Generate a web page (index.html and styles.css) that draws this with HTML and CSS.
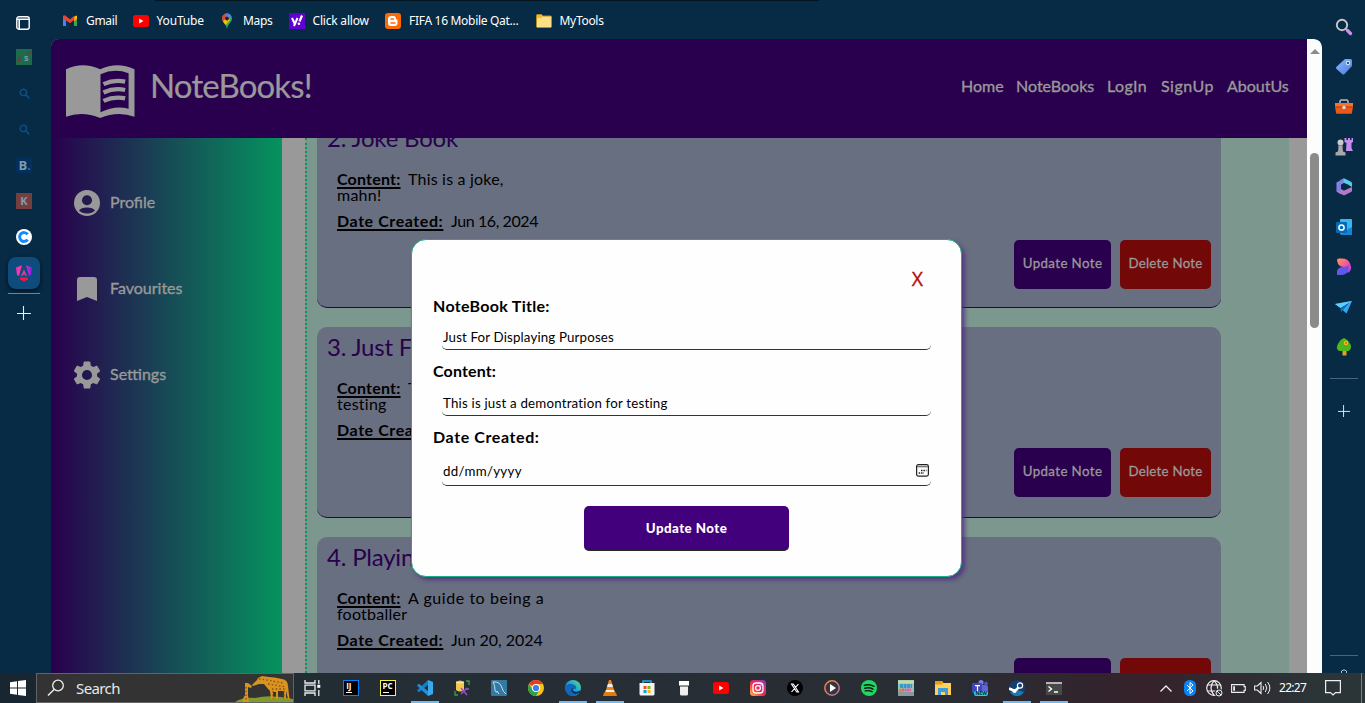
FILE: index.html
```html
<!DOCTYPE html>
<html lang="en">
<head>
<meta charset="utf-8">
<title>NoteBooks!</title>
<link rel="stylesheet" href="styles.css">
</head>
<body>
<svg width="0" height="0" class="defs">
  <defs>
    <linearGradient id="gEdge" x1="0" y1="1" x2="1" y2="0"><stop offset="0" stop-color="#0c59a4"/><stop offset=".5" stop-color="#1b9de2"/><stop offset="1" stop-color="#5fe07a"/></linearGradient>
    <linearGradient id="gInsta" x1="0" y1="1" x2="1" y2="0"><stop offset="0" stop-color="#fdc13d"/><stop offset=".45" stop-color="#f0294e"/><stop offset="1" stop-color="#8a3ac8"/></linearGradient>
    <linearGradient id="gRing" x1="0" y1="0" x2="1" y2="1"><stop offset="0" stop-color="#f58b3c"/><stop offset="1" stop-color="#b06ac0"/></linearGradient>
    <linearGradient id="gAng" x1="0" y1="0" x2="1" y2="0"><stop offset="0" stop-color="#ff2fb5"/><stop offset=".5" stop-color="#f23a9c"/><stop offset="1" stop-color="#7a1cff"/></linearGradient>
    <linearGradient id="gDes" x1="0" y1="0" x2="1" y2="1"><stop offset="0" stop-color="#ff9b52"/><stop offset=".6" stop-color="#f04bb0"/><stop offset="1" stop-color="#a23df0"/></linearGradient>
    <linearGradient id="gTag" x1="0" y1="0" x2="1" y2="1"><stop offset="0" stop-color="#8ab9ff"/><stop offset="1" stop-color="#4a7be0"/></linearGradient>
    <symbol id="yt" viewBox="0 0 16 12"><rect width="16" height="12" rx="2.6" fill="#f00"/><path d="M6.2 3.6v4.8L10.4 6z" fill="#fff"/></symbol>
    <symbol id="mag" viewBox="0 0 10 10"><circle cx="4" cy="4" r="2.9" fill="none" stroke="#0d4e86" stroke-width="1.3"/><path d="M6.2 6.2l3.2 3.2" stroke="#0d4e86" stroke-width="1.4"/></symbol>
    <symbol id="plus" viewBox="0 0 14 14"><path d="M6.500 0v14M0 7.500h14" stroke="#e8eef2" stroke-width="1.1"/></symbol>
  </defs>
</svg>

<div class="desktop">
  <aside class="tabs">
    <div class="tab-menu"><svg width="14" height="14" viewBox="0 0 14 14"><rect x=".8" y=".8" width="12.4" height="12.4" rx="2" fill="none" stroke="#fff" stroke-width="1.4"/><path d="M1 3.3h12M3.200 4v9" stroke="#fff" stroke-width="1.6"/></svg></div>
    <div class="tab"><svg width="16" height="16" viewBox="0 0 16 16"><rect width="16" height="16" fill="#1e6b4c"/><path d="M4 8q-3 3-1 4M2 12l3-1M11 5q4-2 4-1" stroke="#79303c" stroke-width="1.3" fill="none"/><text x="8" y="12" font-size="9" class="glyph-soft">s</text></svg></div>
    <div class="tab"><svg width="11" height="11"><use href="#mag"/></svg></div>
    <div class="tab"><svg width="11" height="11"><use href="#mag"/></svg></div>
    <div class="tab"><svg width="16" height="16" viewBox="0 0 16 16"><rect width="16" height="16" rx="2" fill="#032f5f"/><text x="2.5" y="13" font-size="13" class="glyph-soft">B</text><circle cx="13" cy="12" r="1.3" fill="#0c6a97"/></svg></div>
    <div class="tab"><svg width="16" height="16" viewBox="0 0 16 16"><rect width="16" height="16" fill="#743f3e"/><text x="4.2" y="12.2" font-size="11" class="glyph-soft">K</text></svg></div>
    <div class="tab"><svg width="16" height="16" viewBox="0 0 16 16"><circle cx="8" cy="8" r="8" fill="#fff"/><path d="M11.6 5.4A4.4 4.4 0 1 0 11.6 10.6" fill="none" stroke="#1388ff" stroke-width="3"/></svg></div>
    <div class="tab"><div class="tab-active"><svg width="16" height="17" viewBox="0 0 16 17"><path d="M0 2.500L6 .3 3 11 1 10zM16 2.500L10 .3 13 11l2-1z" fill="url(#gAng)"/><path d="M8 4.500L11 11H9.500L8.800 9.500H7.200L6.500 11H5z" fill="#e83aa0"/><path d="M4 12.500h8v2L8 16.500l-4-2z" fill="#ff0f4f"/></svg></div></div>
    <div class="tab-line"></div>
    <div class="tab-plus"><svg width="14" height="14"><use href="#plus"/></svg></div>
  </aside>

  <section class="center">
    <nav class="bookmarks">
      <div class="bm"><svg width="16" height="16" viewBox="0 0 16 16"><path d="M1 3.500v9.500h3V6z" fill="#4285f4"/><path d="M15 3.500v9.500h-3V6z" fill="#34a853"/><path d="M12 3.600l3-1v3.200l-3 2.400z" fill="#fbbc04"/><path d="M1 3q.8-1.500 2.300-.4L8 6.200l4.400-3.400v4L8 10.200 1 5.400z" fill="#ea4335"/></svg><span class="w-30">Gmail</span></div>
      <div class="bm"><svg width="16" height="12"><use href="#yt"/></svg><span class="w-46">YouTube</span></div>
      <div class="bm"><svg width="16" height="16" viewBox="0 0 16 16"><path d="M8 .5a5 5 0 0 1 5 5c0 4-4 5-5 10.300-1-5.300-5-6.300-5-10.300a5 5 0 0 1 5-5z" fill="#34a853"/><path d="M3 5.500a5 5 0 0 1 7-4.600L4.500 9C3.500 7.500 3 6.800 3 5.500z" fill="#ea4335"/><path d="M6 .9a5 5 0 0 1 6.500 2.500L8 5z" fill="#4285f4"/><path d="M4 8.500L9 3l2 4-4.500 5z" fill="#fbbc04"/><circle cx="8" cy="5.500" r="1.900" fill="#223"/></svg><span class="w-29">Maps</span></div>
      <div class="bm"><svg width="16" height="16" viewBox="0 0 16 16"><rect width="16" height="16" fill="#6001d2"/><path d="M3 5l2.600 5.500M8.500 5L5 13" stroke="#fff" stroke-width="2"/><path d="M13 2.500L10.500 8.500" stroke="#fff" stroke-width="2.200"/><circle cx="9.900" cy="10.800" r="1.300" fill="#fff"/></svg><span class="w-56">Click allow</span></div>
      <div class="bm"><svg width="16" height="16" viewBox="0 0 16 16"><rect width="16" height="16" rx="3" fill="#ff6a00"/><path d="M6 3h2.500Q11 3 11 6l1.500.8V10q0 3-3 3H6q-3 0-3-3V6q0-3 3-3z" fill="#fff"/><path d="M6 6h2.500M6 10h4" stroke="#ff6a00" stroke-width="1.500" stroke-linecap="round"/></svg><span class="w-110">FIFA 16 Mobile Qat...</span></div>
      <div class="bm"><svg width="16" height="14" viewBox="0 0 16 14"><path d="M.5 1.500q0-1 1-1h4l1 1.500h8q1 0 1 1v9.500q0 1-1 1H1.500q-1 0-1-1z" fill="#ffdf85" stroke="#b58b1e"/><path d="M1 1h4.800l.7 1.500L5.500 4H1z" fill="#f4bd22"/></svg><span class="w-44">MyTools</span></div>
    </nav>

    <div class="page">
      <div class="site">
        <header class="site-head">
          <svg class="book" width="69" height="54" viewBox="0 0 70 54"><path fill="#999" fill-rule="evenodd" d="M0 4Q17-4.500 34.700 4Q52-4.500 69.500 4V52Q52 46 34.700 53.500Q17 46 0 52zM35 9V47.500Q50 40 63.500 44V8Q49 2.500 35 9z"/><path d="M38 19Q49 14 60 16.500M38 27.500Q49 22.500 60 25M38 36Q49 31 60 33.500" fill="none" stroke="#999" stroke-width="4.300"/></svg>
          <h1>NoteBooks!</h1>
          <nav class="links"><a class="l1">Home</a><a class="l2">NoteBooks</a><a class="l3">LogIn</a><a class="l4">SignUp</a><a class="l5">AboutUs</a></nav>
        </header>
        <div class="site-body">
          <aside class="menu">
            <div class="menu-item"><svg width="26" height="26" viewBox="0 0 26 26"><circle cx="13" cy="13" r="13" fill="#999"/><circle cx="13" cy="10.300" r="5" fill="#241a50"/><path d="M5 20.500Q7 17.500 13 17.500T21 20.500Q18 23.400 13 23.400T5 20.500z" fill="#241a50"/></svg><span class="m1">Profile</span></div>
            <div class="menu-item"><svg width="26" height="26" viewBox="0 0 26 26"><path d="M3 4q0-3 3-3h14q3 0 3 3v21l-10-4-10 4z" fill="#999"/></svg><span class="m2">Favourites</span></div>
            <div class="menu-item"><svg width="28" height="28" viewBox="2 2 20 20" class="gear"><path fill="#999" d="M19.140 12.940c.04-.3.060-.61.060-.94s-.02-.64-.070-.94l2.030-1.580a.49.490 0 0 0 .12-.61l-1.920-3.320a.49.490 0 0 0-.59-.22l-2.390.96c-.5-.38-1.030-.7-1.620-.94L14.400 2.810A.48.480 0 0 0 13.920 2.400h-3.840c-.24 0-.43.170-.47.410l-.36 2.540c-.59.240-1.130.57-1.620.94l-2.390-.96a.48.480 0 0 0-.59.220L2.740 8.870c-.12.210-.08.470.12.610l2.030 1.580c-.05.300-.09.630-.09.940s.02.640.070.940l-2.030 1.580a.49.490 0 0 0-.12.610l1.920 3.320c.12.220.37.290.59.220l2.390-.96c.5.380 1.030.7 1.620.94l.36 2.540c.05.240.24.410.48.410h3.840c.24 0 .44-.17.470-.41l.36-2.540c.59-.24 1.130-.56 1.620-.94l2.390.96c.22.080.47 0 .59-.22l1.920-3.320a.48.480 0 0 0-.12-.61zM12 15.600a3.600 3.600 0 1 1 0-7.200 3.600 3.600 0 0 1 0 7.200z"/></svg><span class="m3">Settings</span></div>
          </aside>
          <main class="notes">
            <article class="card">
              <h2>2. Joke Book</h2>
              <p><b class="k1">Content:</b><span class="v1">This is a joke,</span></p><p><span class="c1">mahn!</span></p>
              <p class="date"><b class="k2">Date Created:</b><span class="v2">Jun 16, 2024</span></p>
              <div class="actions"><button class="upd">Update Note</button><button class="del">Delete Note</button></div>
            </article>
            <article class="card">
              <h2>3. Just For</h2>
              <p><b class="k1">Content:</b><span class="v1">This</span></p><p><span class="c1">testing</span></p>
              <p class="date"><b class="k2">Date Created:</b></p>
              <div class="actions"><button class="upd">Update Note</button><button class="del">Delete Note</button></div>
            </article>
            <article class="card">
              <h2>4. Playing</h2>
              <p><b class="k1">Content:</b><span class="v4">A guide to being a</span></p><p><span class="c1">footballer</span></p>
              <p class="date"><b class="k2">Date Created:</b><span class="v5">Jun 20, 2024</span></p>
              <div class="actions"><button class="upd">Update Note</button><button class="del">Delete Note</button></div>
            </article>
          </main>
        </div>
        <div class="modal">
          <div class="close">X</div>
          <div class="label f1">NoteBook Title:</div>
          <div class="field"><span class="i1">Just For Displaying Purposes</span></div>
          <div class="label f2">Content:</div>
          <div class="field mid"><span class="i2">This is just a demontration for testing</span></div>
          <div class="label f3">Date Created:</div>
          <div class="field tall"><span class="i3">dd/mm/yyyy</span><svg width="13" height="13" viewBox="0 0 13 13"><rect x=".6" y=".6" width="11.800" height="11.500" rx="1.800" fill="none" stroke="#222" stroke-width="1.200"/><path d="M1 2.600h11" stroke="#777" stroke-width="1.500"/><path d="M5 6.500H10.500M2.700 9H8" stroke="#222" stroke-width="1.500" stroke-dasharray="1.500 .9"/></svg></div>
          <button class="save">Update Note</button>
        </div>
      </div>
      <div class="scroll"><svg width="10" height="5" viewBox="0 0 10 5"><path d="M0 5l5-5 5 5z" fill="#8b8b8b"/></svg><div class="thumb"></div></div>
    </div>
  </section>

  <aside class="apps">
    <div class="app"><svg width="18" height="18" viewBox="0 0 18 18"><circle cx="7" cy="7" r="5.200" fill="none" stroke="#c8c8c8" stroke-width="1.900"/><path d="M11 11l2 2" stroke="#bbb" stroke-width="2"/><path d="M12.500 12.500l3 3" stroke="#cf8df5" stroke-width="3.200" stroke-linecap="round"/></svg></div>
    <div class="app"><svg width="18" height="18" viewBox="0 0 18 18"><path d="M10 1h5.500q1.500 0 1.500 1.500V8L9.500 16q-1.200 1-2.300 0L1.500 11q-1-1.200 0-2.300z" fill="url(#gTag)"/><circle cx="13" cy="5" r="2.200" fill="#d6e4f5"/><circle cx="13" cy="5" r="1" fill="#123"/></svg></div>
    <div class="app"><svg width="18" height="18" viewBox="0 0 18 18"><path d="M5 5V3.500Q5 2 6.500 2h5Q13 2 13 3.500V5" fill="none" stroke="#bbb" stroke-width="1.500"/><path d="M0 5h18v3.500L17 15q0 .8-1 .8H2q-1 0-1-.8L0 8.500z" fill="#e8591b"/><path d="M0 5h18v3.500H0z" fill="#f4712f"/><path d="M0 9h18" stroke="#b83c0e"/><circle cx="9" cy="9.500" r="1.700" fill="#ddd"/></svg></div>
    <div class="app"><svg width="18" height="18" viewBox="0 0 18 18"><path d="M9.500 0h2v2h1.500V0h2v2h1.500V0H18v4l-1.500 1v5l1.500 3h-7L11.500 5 9.500 4z" fill="#c58cf0"/><circle cx="5.500" cy="4.500" r="3" fill="#c9c9c9"/><path d="M3 7.500h5l-.5 1.500.5 4.500 2.500 1V17.500H.5v-3l2.500-1L3.500 9z" fill="#a8a8a8"/></svg></div>
    <div class="app"><svg width="18" height="18" viewBox="0 0 18 18"><path d="M9 .5l-7.500 4v9l4.500 3V6.500L9 5l2-1z" fill="#8c84e0"/><path d="M8 .8q1-.5 2 0l6 3q1 .5 1 1.700V9l-5-3-4-1z" fill="#58c9ef"/><path d="M17 9v3.500q0 1-1 1.500l-6 3q-1 .5-2 0l-5-3 3-4 3 2.500z" fill="#b47ac8"/><path d="M5 1.800l4-1.600V5L6 7v6L1.500 12z" fill="#6f7fe2" opacity=".6"/><path d="M6 7l3-2 3.500 2v3.500L9 12.500 6 11z" fill="#072944"/></svg></div>
    <div class="app"><svg width="18" height="18" viewBox="0 0 18 18"><rect x="5" y="1" width="12" height="15" rx="1" fill="#35b8f1"/><path d="M17 9v8H5l8-6z" fill="#1684d8"/><rect x="1" y="4" width="11" height="11" rx="1" fill="#0669b4"/><circle cx="6.500" cy="9.500" r="2.600" fill="none" stroke="#fff" stroke-width="1.500"/></svg></div>
    <div class="app"><svg width="18" height="18" viewBox="0 0 18 18"><path d="M2 2q0-1.500 2-1.500h3q6 0 8 5Q18 12 13 15L9 9q-4 0-6-3z" fill="url(#gDes)"/><path d="M2 17V13q1-4 6-4 4 0 5.500-2 1.500 9-6.500 10z" fill="#6258e8"/></svg></div>
    <div class="app"><svg width="18" height="18" viewBox="0 0 18 18"><path d="M0 6l17-3-5.500 12.500-4-3.500L14 5 5.500 10z" fill="#2fa9f0"/><path d="M0 6l17-3L5.500 10z" fill="#64ccfa"/><path d="M5.500 10L14 5l-6 7-2 2z" fill="#0d72c6"/></svg></div>
    <div class="app"><svg width="18" height="18" viewBox="0 0 18 18"><path d="M7.500 12h4v5.500h-4z" fill="#e8a11d"/><path d="M9 0q4 1.500 5.500 5 3.500 4-.5 8H4q-4-3-.5-8Q5 1.500 9 0z" fill="#4db51e"/><circle cx="11" cy="5" r="2.300" fill="#f7b817"/><circle cx="11" cy="5" r=".9" fill="#e2521b"/></svg></div>
    <div class="app-line"></div>
    <div class="app-plus"><svg width="12" height="12"><use href="#plus"/></svg></div>
    <div class="app-line low"></div>
    <svg class="app-cog" width="6" height="4" viewBox="0 0 6 4"><path d="M.5 4V2Q3-.5 5.500 2v2" fill="none" stroke="#b8c4cc"/></svg>
  </aside>
</div>

<footer class="taskbar">
  <div class="start"><svg width="16" height="16" viewBox="0 0 16 16"><path d="M0 2.200L7 1.200V7.500H0zM8 1L16 0v7.500H8zM0 8.500h7v6.300L0 13.800zM8 8.500h8V16l-8-1z" fill="#fff"/></svg></div>
  <div class="search">
    <svg width="18" height="18" viewBox="0 0 18 18"><circle cx="11" cy="6.500" r="5.300" fill="none" stroke="#eee" stroke-width="1.300"/><path d="M7.300 10.300L1 16.500" stroke="#eee" stroke-width="1.400"/></svg>
    <span>Search</span>
    <svg class="giraffe" width="58" height="26" viewBox="0 0 58 26"><path d="M0 26q8-5 20-4 16-4 38 1v3z" fill="#7f9c2c"/><path d="M22 4l-5 5 1 1 6-2 5 0q4 5 6 7l1 8h2v-7h3v7h2v-8h6v8h2v-8l2 8h1.500L53 10q0-6-6-7-8-2-13-2l-7-1-4 2z" fill="#d9931f"/><path d="M10 7l3 0 4 3-1 2-3-1v8l1 7h-7q1-4 3-7z" fill="#d9931f"/><path d="M24 3l8 1 16 3M33 8l18 3M37 13h14M38 15v8M49 15v8M11 11v13" fill="none" stroke="#8a4c12" stroke-width="1.300" stroke-dasharray="1.500 2.200"/></svg>
  </div>
  <div class="task view"><svg width="17" height="16" viewBox="0 0 17 16"><path d="M1 0v3h10V0M1 16v-3h10v3M1 5.200h10v5.600H1zM14.800 0v4M14.800 10v6" fill="none" stroke="#eee" stroke-width="1.300"/><rect x="13.300" y="4.800" width="3" height="3" fill="#fff"/></svg></div>
  <div class="task"><svg width="16" height="16" viewBox="0 0 16 16"><rect x=".5" y=".5" width="15" height="15" fill="#000" stroke="#087cfa"/><text x="3.200" y="9" font-size="8" class="glyph">IJ</text><path d="M3 12.500h6" stroke="#fff"/></svg></div>
  <div class="task"><svg width="16" height="16" viewBox="0 0 16 16"><rect x=".5" y=".5" width="15" height="15" fill="#000" stroke="#f5f04a"/><text x="2.500" y="9" font-size="8" class="glyph">PC</text><path d="M3 12.500h6" stroke="#fff"/></svg></div>
  <div class="task on"><svg width="16" height="16" viewBox="0 0 16 16"><path d="M11 0l5 2v12l-5 2z" fill="#3ba9ee"/><path d="M11 0v5L2 12.300.3 11 .3 10z" fill="#147dc2"/><path d="M11 16v-5L2 3.700.3 5v1z" fill="#1e8ed8"/></svg></div>
  <div class="task"><svg width="16" height="16" viewBox="0 0 16 16"><path d="M2 2q4-3 8 0v8q-4 3-8 0z" fill="#f1c84c"/><path d="M2 2q4 2 8 0" stroke="#fff0b0" fill="none"/><path d="M12 1h3v4M1 11v4h3" fill="none" stroke="#3ca03c" stroke-width="1.300"/><path d="M7 8l6 7M13 8l-6 6M12 9h3" stroke="#9b4fc8" stroke-width="1.500"/></svg></div>
  <div class="task"><svg width="16" height="16" viewBox="0 0 16 16"><rect width="16" height="16" rx="1" fill="#3279a4"/><path d="M2 2q7-1 9 6 1 4 4 6M2 2q2 3 2 8 1 4 2 1l2 3" fill="none" stroke="#c4dfec"/></svg></div>
  <div class="task"><svg width="16" height="16" viewBox="0 0 16 16"><circle cx="8" cy="8" r="8" fill="#fbc116"/><path d="M8 8L1.100 4A8 8 0 0 1 14.900 4H8z" fill="#e33b2e"/><path d="M1.100 4A8 8 0 0 0 8 16l3.500-6H8L4.500 10z" fill="#2ba24c"/><circle cx="8" cy="8" r="4" fill="#fff"/><circle cx="8" cy="8" r="3.100" fill="#3b7ded"/></svg></div>
  <div class="task on"><svg width="16" height="16" viewBox="0 0 16 16"><circle cx="8" cy="8" r="8" fill="url(#gEdge)"/><path d="M0 8Q2 3 7 4q5 1 4 5H7q1 4 6 4-3 3-6 3Q1 15 0 8z" fill="#1268b8"/><path d="M8.500 7.500q-2 2.500 1 4 4 1 6-1.500V12q-2 2-5 2-5-1-4-5z" fill="#0d3357"/></svg></div>
  <div class="task on"><svg width="14" height="16" viewBox="0 0 14 16"><path d="M6 0h2l4 13H2z" fill="#f08516"/><path d="M5 4h4l1 3H4z" fill="#eee"/><path d="M3 10h8l.7 2H2.300z" fill="#eee"/><path d="M1 12.500h12l1 3.500H0z" fill="#e67808"/></svg></div>
  <div class="task"><svg width="16" height="16" viewBox="0 0 16 16"><path d="M4 3V1h8v2" fill="none" stroke="#2aa7e8" stroke-width="1.500"/><path d="M.5 3h15v11q0 1.500-1.500 1.500H2Q.5 15.500.5 14z" fill="#f4f4f4"/><path fill="#f25022" d="M4.500 6h3v3h-3z"/><path fill="#7fba00" d="M8.500 6h3v3h-3z"/><path fill="#00a4ef" d="M4.500 10h3v3h-3z"/><path fill="#ffb900" d="M8.500 10h3v3h-3z"/></svg></div>
  <div class="task"><svg width="12" height="16" viewBox="0 0 12 16"><path d="M1 1h10v4.500H1z" fill="#fff"/><path d="M2 6.500h8v7.500q0 1.500-1.500 1.500h-5Q2 15.500 2 14z" fill="#eee"/></svg></div>
  <div class="task"><svg width="16" height="12"><use href="#yt"/></svg></div>
  <div class="task"><svg width="16" height="16" viewBox="0 0 16 16"><rect width="16" height="16" rx="3.500" fill="url(#gInsta)"/><rect x="3" y="3" width="10" height="10" rx="3" fill="none" stroke="#fff" stroke-width="1.300"/><circle cx="8" cy="8" r="2.400" fill="none" stroke="#fff" stroke-width="1.300"/><circle cx="11" cy="5" r=".7" fill="#fff"/></svg></div>
  <div class="task"><svg width="16" height="16" viewBox="0 0 16 16"><circle cx="8" cy="8" r="8" fill="#000"/><path d="M4.500 4h1.800l5.200 8H9.700zM11.500 4L8.500 7.400M7.500 8.600L4.500 12" fill="none" stroke="#fff" stroke-width="1.100"/></svg></div>
  <div class="task"><svg width="16" height="16" viewBox="0 0 16 16"><circle cx="8" cy="8" r="7.200" fill="#37343c" stroke="url(#gRing)" stroke-width="1.500"/><path d="M6 4l6 4-6 4z" fill="#fff"/></svg></div>
  <div class="task"><svg width="16" height="16" viewBox="0 0 16 16"><circle cx="8" cy="8" r="8" fill="#1ed760"/><path d="M3.300 5.300q5-1.500 9.700 1M3.800 8.200q4.500-1.200 8.200.9M4.200 10.900q4-.9 6.900.8" fill="none" stroke="#111" stroke-width="1.400" stroke-linecap="round"/></svg></div>
  <div class="task"><svg width="16" height="16" viewBox="0 0 16 16"><rect width="16" height="16" fill="#8dc7c0"/><path d="M0 2h16" stroke="#c9dc9a" stroke-width="3"/><path d="M2 6h12" stroke="#3a96d0" stroke-width="4" stroke-dasharray="3 .6"/><path d="M4 10h9" stroke="#e05a97" stroke-width="3" stroke-dasharray="2 .6"/><circle cx="2.500" cy="10.500" r="2" fill="#d98a40"/><path d="M0 14h16" stroke="#8a98a0" stroke-width="4"/></svg></div>
  <div class="task"><svg width="16" height="14" viewBox="0 0 16 14"><path d="M0 0h7l1.500 2H16v12H0z" fill="#ffd05a"/><path d="M0 0h7l1 2-1 1.500H0z" fill="#e8a00c"/><path d="M3 14V7h10v7h-3v-3H6v3z" fill="#3f9ce0"/></svg></div>
  <div class="task"><svg width="16" height="16" viewBox="0 0 16 16"><circle cx="9" cy="2.500" r="2.500" fill="#7b83eb"/><circle cx="14" cy="3.500" r="1.800" fill="#5059c9"/><rect x="6" y="5" width="10" height="9" rx="2" fill="#5e66d8"/><rect x="0" y="3" width="10" height="10" rx="1" fill="#4048b5"/><path d="M3 5.700h5M5.500 5.700v6" stroke="#fff" stroke-width="1.200"/><rect x="2" y="11" width="14" height="5" rx="2" fill="#19d6e0"/><text x="3.500" y="15.300" font-size="5" class="glyph-dark">NEW</text></svg></div>
  <div class="task on"><svg width="16" height="16" viewBox="0 0 16 16"><circle cx="8" cy="8" r="8" fill="#12406e"/><path d="M1 12a8 8 0 0 0 14 0l-7-2z" fill="#1a78b4"/><path d="M0 8.500l6 2.500 4.500-4.500" stroke="#fff" stroke-width="2.600" fill="none"/><circle cx="11" cy="5.500" r="2.600" fill="#12406e" stroke="#fff" stroke-width="1.200"/><circle cx="5.500" cy="11" r="2" fill="#fff"/></svg></div>
  <div class="task on"><svg width="16" height="13" viewBox="0 0 16 13"><rect width="16" height="13" fill="#484848"/><path d="M0 0h16v2H0z" fill="#b5b5b5"/><path d="M2.500 4.500L5.500 7l-3 2.500M8 10h4" fill="none" stroke="#fff" stroke-width="1.400"/></svg></div>
  <div class="tray">
    <div><svg width="12" height="7" viewBox="0 0 12 7"><path d="M.5 6.500L6 1l5.500 5.500" fill="none" stroke="#eee" stroke-width="1.300"/></svg></div>
    <div><svg width="12" height="16" viewBox="0 0 12 16"><rect width="12" height="16" rx="5.500" fill="#0a84f5"/><path d="M3 5l6 6-3 2.500v-11L9 5l-6 6" fill="none" stroke="#fff"/></svg></div>
    <div><svg width="17" height="17" viewBox="0 0 17 17"><g fill="none" stroke="#eee" stroke-width="1.200"><circle cx="8" cy="8" r="7.300"/><path d="M1.500 5h13M1.500 11h8M8 .7q-6 7.300 0 14.600M8 .7q4 4 3.500 8"/></g><circle cx="13" cy="13" r="4.300" fill="#2d3035"/><circle cx="13" cy="13" r="3" fill="none" stroke="#eee"/><path d="M11 11l4 4" stroke="#eee"/></svg></div>
    <div><svg width="15" height="9" viewBox="0 0 15 9"><path d="M.6.600h12.500v2h1.200v3.800h-1.200v2H.6z" fill="none" stroke="#eee" stroke-width="1.100"/><path d="M2.200 2.200h1.800v4.600H2.200z" fill="#eee"/></svg></div>
    <div><svg width="17" height="14" viewBox="0 0 17 14"><path d="M.6 5h2.700L7 1.500v11L3.300 9H.6z" fill="none" stroke="#eee" stroke-width="1.100"/><path d="M9 5q1.500 2 0 4M11.300 3q3 4 0 8M13.600 1q4.600 6 0 12" fill="none" stroke="#eee"/></svg></div>
  </div>
  <div class="clock">22:27</div>
  <div class="chat"><svg width="16" height="16" viewBox="0 0 16 16"><path d="M.6.600h14.800v12H10.500L8 15l-2.500-2.400H.6z" fill="none" stroke="#eee" stroke-width="1.200"/></svg></div>
  <div class="peek"></div>
</footer>
</body>
</html>
```
FILE: styles.css
```css
* { box-sizing: border-box; }
body { margin: 0; width: 1365px; height: 703px; overflow: hidden; background: #072a45; font-family: Lato, "Open Sans", sans-serif; }
svg { display: block; flex: none; }
.defs { position: absolute; }
h1, h2, p { margin: 0; font-weight: 400; }
button { border: 0; padding: 0; font-family: inherit; white-space: nowrap; }
span, b, a { white-space: nowrap; }
.glyph, .glyph-soft, .glyph-dark { font-family: "Open Sans", sans-serif; font-weight: 700; fill: #fff; }
.glyph-soft { fill: #7e9cab; }
.glyph-dark { fill: #052a35; }

.desktop { display: grid; grid-template-columns: 51px 1271px 43px; height: 673px; }

.tabs { display: flex; flex-direction: column; align-items: center; padding-right: 3px; }
.tab-menu { height: 39px; padding: 16px 0 0; margin-left: -2px; }
.tab { height: 36px; display: grid; place-items: center; }
.tab-active { width: 32px; height: 32px; border-radius: 8px; background: #0d4c7b; display: grid; place-items: center; box-shadow: 0 2px 4px rgba(0, 0, 0, .6); }
.tab-line { width: 32px; height: 1px; margin-top: 2px; background: #6b8597; }
.tab-plus { margin-top: 12px; }

.center { height: 673px; background: linear-gradient(#04141f, #04141f) 104px 0 / 664px 1px no-repeat; }
.bookmarks { height: 39px; padding: 3px 0 0 11px; display: flex; gap: 16.500px; align-items: center; }
.bm { display: flex; align-items: center; gap: 8px; color: #fff; font: 12px/16px "Noto Sans", sans-serif; letter-spacing: -.3px; }
.w-30 { width: 30px; } .w-46 { width: 46px; letter-spacing: -.15px; } .w-29 { width: 29px; } .w-56 { width: 56px; letter-spacing: -.2px; } .w-110 { width: 110px; letter-spacing: -.3px; } .w-44 { width: 44px; }

.page { display: flex; height: 634px; border-radius: 8px 8px 0 0; overflow: hidden; }
.site { width: 1256px; position: relative; background: #999; }
.site-head { height: 99px; background: #29004d; color: #999; display: flex; align-items: center; padding: 0 18px 0 15px; }
.book { margin-top: 6px; }
h1 { width: 164px; margin: -8px 0 0 15px; font-size: 33px; line-height: 40px; letter-spacing: -.85px; -webkit-text-stroke: .2px #999; }
.links { margin-left: auto; display: flex; gap: 13px; margin-top: -5px; font-size: 16px; line-height: 20px; -webkit-text-stroke: .35px #999; }
.l1 { width: 42px; } .l2 { width: 78px; } .l3 { width: 41px; letter-spacing: .4px; } .l4 { width: 53px; letter-spacing: .5px; } .l5 { width: 62px; }

.site-body { display: flex; height: 535px; overflow: hidden; }
.menu { width: 231px; padding: 22px 0 0 23px; background: linear-gradient(90deg, #29004d, #05935e); color: #999; }
.menu-item { height: 86px; display: flex; align-items: center; gap: 10px; font-size: 16px; -webkit-text-stroke: .35px #999; }
.menu-item span { margin-top: -4px; }
.gear { margin: 0 -1px; }

.notes { width: 984px; margin-left: 23px; padding-left: 10px; background: #7c978d; border-left: 2px dotted #05935e; overflow: hidden; display: flex; flex-direction: column; gap: 19px; }
.card { flex: none; width: 904px; height: 191px; border-radius: 10px; border-bottom: 1px solid #29004d; background: #686f80; padding: 6px 10px 0; color: #000; font-size: 16px; line-height: 16px; }
.card:first-child { margin-top: -21px; }
.card h2 { height: 46.500px; font-size: 24px; line-height: 27px; color: #29004d; letter-spacing: -.2px; }
.card:first-child h2 { height: 48px; padding-top: 1px; }
.card p { padding-left: 10px; display: flex; gap: 8px; }
.card p.date { margin-top: 10px; }
.card b { text-decoration: underline; text-underline-offset: 2px; text-decoration-thickness: 2px; }
.k1 { width: 63px; letter-spacing: .2px; } .k2 { width: 106px; letter-spacing: .58px; }
.v1 { letter-spacing: .2px; } .v2 { letter-spacing: -.4px; } .v4 { letter-spacing: .55px; } .c1 { letter-spacing: .25px; }
.actions { display: flex; justify-content: flex-end; gap: 9px; margin-top: 10.500px; }
.actions button { height: 49px; border-radius: 5px; color: #999; font-size: 13.300px; padding-bottom: 3px; -webkit-text-stroke: .3px #999; }
.actions .upd { width: 97px; background: #29004d; letter-spacing: .4px; }
.actions .del { width: 91px; background: #720808; letter-spacing: .25px; }
.v5 { letter-spacing: 0; }

.modal { position: absolute; left: 360px; top: 200px; width: 551px; height: 338px; border: 1px solid #19b081; border-radius: 15px; background: #fefefe; box-shadow: 3px 3px 4px rgba(78, 40, 130, .75); padding: 28px 30px 0 21px; color: #000; }
.close { height: 22px; padding-right: 8px; text-align: right; font-size: 19.500px; line-height: 21px; color: #b50b0b; font-family: "Open Sans", sans-serif; -webkit-text-stroke: .3px #b50b0b; }
.label { font-size: 16px; font-weight: 700; line-height: 20px; white-space: nowrap; }
.field { margin: 4px 0 0 9px; height: 30px; border-bottom: 1px solid #2a3b20; border-radius: 5px; font-size: 13.300px; line-height: 20px; display: flex; justify-content: space-between; align-items: center; padding: 5px 2px 0 1px; }
.f1 { margin-top: 6px; letter-spacing: .3px; }
.f2 { margin-top: 11px; letter-spacing: .15px; }
.f3 { margin-top: 11px; letter-spacing: .6px; }
.i1 { letter-spacing: .15px; } .i2 { letter-spacing: .2px; } .i3 { letter-spacing: .3px; }
.field.mid { height: 31px; }
.field.tall { height: 35px; }
.save { display: block; width: 205px; height: 45px; margin: 20px 0 0 151px; padding-bottom: 1px; border-radius: 5px; border-bottom: 1px solid #25301c; background: #42007d; color: #fff; font-size: 13.300px; font-weight: 900; letter-spacing: .45px; }

.scroll { width: 15px; background: #fdfdfd; border-radius: 0 8px 0 0; padding: 10px 3px 0; display: flex; flex-direction: column; align-items: center; }
.thumb { width: 9px; height: 175px; margin-top: 99px; border-radius: 5px; background: #8b8b8b; }

.apps { display: flex; flex-direction: column; align-items: center; padding: 7px 0 0 1px; overflow: hidden; }
.app { height: 40.150px; display: grid; place-items: center; }
.app-line { width: 28px; height: 1px; margin-top: 11px; background: #49647a; }
.app-plus { margin-top: 26px; }
.app-line.low { margin-top: 238px; }
.app-cog { margin-top: 13px; }

.taskbar { height: 30px; display: flex; background: linear-gradient(90deg, #172630 0, #252e34 30%, #2a2d34 70%, #35212a 84%, #2b3437 96%); }
.start { width: 36px; display: grid; place-items: center; }
.search { width: 258px; border: 1px solid #636363; background: #333; display: flex; align-items: center; padding-left: 10px; color: #e8e8e8; font: 15px/20px "Noto Sans", sans-serif; letter-spacing: -.6px; }
.search span { margin-left: 11px; }
.giraffe { margin-left: auto; margin-top: 2px; }
.task { width: 37px; height: 30px; display: grid; place-items: center; }
.task.view { width: 38px; padding-right: 1px; }
.task.on { background: linear-gradient(#76b9ed, #76b9ed) center bottom / 28px 2px no-repeat; }
.tray { display: flex; margin-left: 82px; }
.tray div { width: 24px; display: grid; place-items: center; }
.clock { width: 29px; margin-left: 5px; color: #fff; font: 12px/30px "Noto Sans", sans-serif; letter-spacing: -.7px; }
.chat { margin-left: 17px; display: grid; place-items: center; }
.peek { width: 1px; margin-left: 20px; background: #778085; }
```
